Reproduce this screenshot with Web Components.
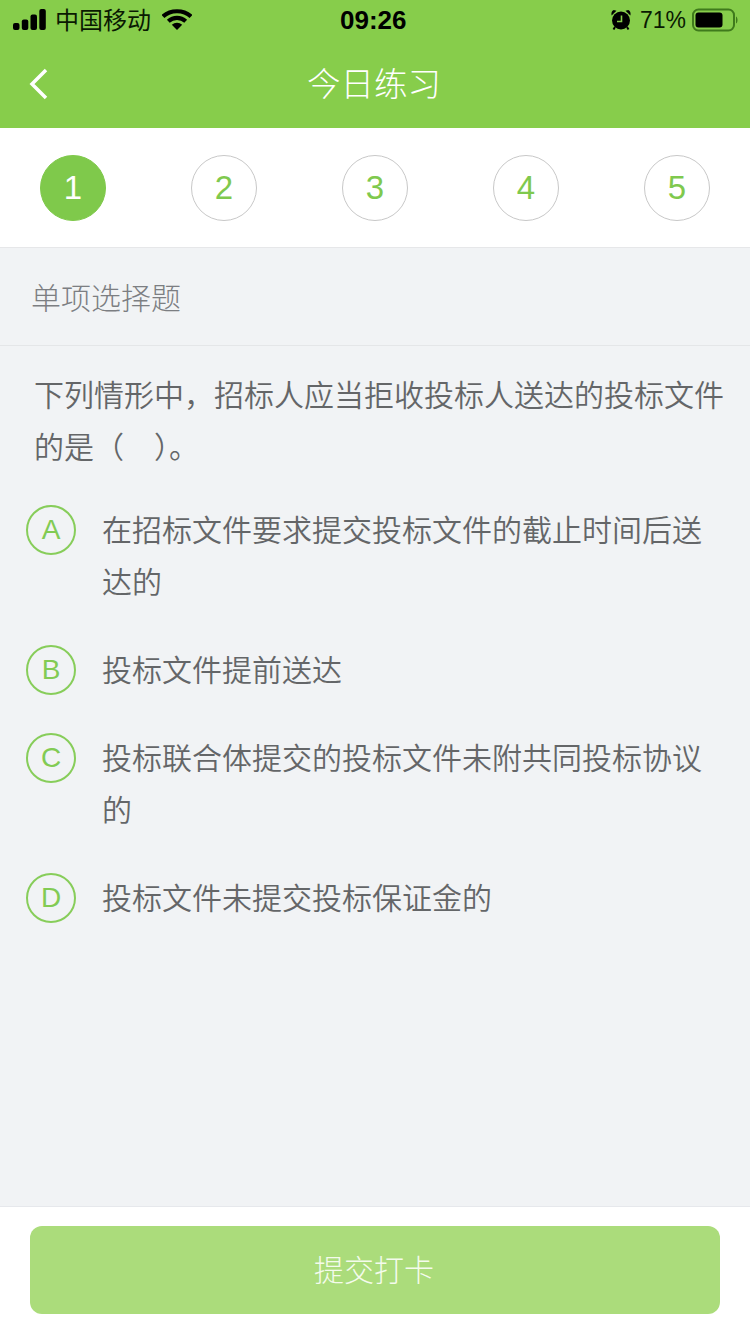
<!DOCTYPE html>
<html lang="zh">
<head>
<meta charset="utf-8">
<title>今日练习</title>
<style>
  html, body { margin: 0; padding: 0; }
  body {
    width: 750px;
    height: 1334px;
    overflow: hidden;
    display: flex;
    flex-direction: column;
    background: #f1f3f5;
    font-family: "Liberation Sans", "Noto Sans CJK SC", sans-serif;
  }
</style>
</head>
<body>
<status-bar></status-bar>
<nav-bar>今日练习</nav-bar>
<step-tabs></step-tabs>
<section-title>单项选择题</section-title>
<quiz-question>下列情形中，招标人应当拒收投标人送达的投标文件的是（　）。</quiz-question>
<quiz-option letter="A">在招标文件要求提交投标文件的截止时间后送达的</quiz-option>
<quiz-option letter="B">投标文件提前送达</quiz-option>
<quiz-option letter="C">投标联合体提交的投标文件未附共同投标协议的</quiz-option>
<quiz-option letter="D">投标文件未提交投标保证金的</quiz-option>
<submit-bar>提交打卡</submit-bar>

<script>
function shadow(el, html) {
  el.attachShadow({ mode: "open" }).innerHTML = html;
}

class StatusBar extends HTMLElement {
  constructor() {
    super();
    shadow(this, `
<style>
  :host {
    display: flex;
    align-items: center;
    justify-content: space-between;
    height: 40px;
    padding: 0 12px 0 13px;
    background: #87cd4b;
    color: #0a1a02;
    font: 24px "Liberation Sans", "Noto Sans CJK SC", sans-serif;
    position: relative;
  }
  .side { display: flex; align-items: center; }
  .carrier { margin: -4px 0 0 9px; }
  .wifi { margin-left: 11px; }
  .time {
    position: absolute;
    left: 340px;
    font-weight: 700;
    font-size: 26px;
    color: #000;
  }
  .pct { margin-left: 9px; font-size: 23px; }
  .batt { margin-left: 6px; }
</style>
<div class="side">
  <svg width="33" height="22" viewBox="0 0 33 22">
    <rect x="0" y="14" width="6.500" height="7" rx="2" fill="#000"/>
    <rect x="8.800" y="10.500" width="6.500" height="10.500" rx="2" fill="#000"/>
    <rect x="17.500" y="5.500" width="6.500" height="15.500" rx="2" fill="#000"/>
    <rect x="26.300" y="0" width="6.500" height="21" rx="2" fill="#000"/>
  </svg>
  <span class="carrier">中国移动</span>
  <svg class="wifi" width="30" height="22" viewBox="0 0 30 22">
    <path d="M1 7.500C8.500 .5 21.500 .5 29 7.500" fill="none" stroke="#000" stroke-width="4.200"/>
    <path d="M6.300 12.300C11.300 7.800 18.700 7.800 23.700 12.300" fill="none" stroke="#000" stroke-width="4.200"/>
    <path d="M9.800 15.800C12.800 13 17.200 13 20.200 15.800L15 21Z" fill="#000"/>
  </svg>
</div>
<span class="time">09:26</span>
<div class="side">
  <svg width="20" height="22" viewBox="0 0 20 22">
    <path d="M.6 6.500L5.500 1.800 2.800 1C.8 1.800 0 4 .6 6.500ZM19.400 6.500L14.500 1.800 17.200 1C19.200 1.800 20 4 19.400 6.500Z" fill="#000"/>
    <circle cx="10" cy="11.500" r="9" fill="#000"/>
    <path d="M10.500 6.500V12.500H6" fill="none" stroke="#87cd4b" stroke-width="1.600"/>
    <path d="M4 18L2.500 20.500M16 18L17.500 20.500" stroke="#000" stroke-width="2"/>
  </svg>
  <span class="pct">71%</span>
  <svg class="batt" width="46" height="24" viewBox="0 0 46 24">
    <rect x="1" y="1.500" width="41" height="21" rx="5.500" fill="none" stroke="#3f7a1c" stroke-width="2"/>
    <rect x="3.500" y="4.500" width="27" height="15" rx="3" fill="#000"/>
    <path d="M44 8.500C46 9.500 46 14.500 44 15.500Z" fill="#3f7a1c"/>
  </svg>
</div>`);
  }
}

class NavBar extends HTMLElement {
  constructor() {
    super();
    shadow(this, `
<style>
  :host {
    display: flex;
    align-items: center;
    justify-content: center;
    position: relative;
    height: 88px;
    background: #87cd4b;
    color: #fff;
    font: 33.500px "Noto Sans CJK SC", sans-serif;
    font-weight: 300;
  }
  .back { position: absolute; left: 28px; top: 28px; }
  .title { margin-top: -5px; margin-left: -2px; }
</style>
<svg class="back" width="20" height="32" viewBox="0 0 20 32">
  <path d="M18 2L4 16 18 30" fill="none" stroke="#fff" stroke-width="3.500"/>
</svg>
<span class="title"><slot></slot></span>`);
  }
}

class StepTabs extends HTMLElement {
  constructor() {
    super();
    const items = [1, 2, 3, 4, 5].map(n =>
      `<span class="step${n === 1 ? " on" : ""}">${n}</span>`).join("");
    shadow(this, `
<style>
  :host {
    display: flex;
    justify-content: space-between;
    align-items: flex-start;
    box-sizing: border-box;
    height: 120px;
    padding: 27px 40px 0;
    background: #fff;
    border-bottom: 1px solid #e6e7e9;
  }
  .step {
    box-sizing: border-box;
    width: 66px;
    height: 66px;
    border-radius: 50%;
    border: 1px solid #c8c8c8;
    display: flex;
    align-items: center;
    justify-content: center;
    color: #7fc94e;
    font: 33px "Liberation Sans", sans-serif;
  }
  .on { background: #7fc94b; border-color: #7fc94b; color: #fff; }
</style>
${items}`);
  }
}

class SectionTitle extends HTMLElement {
  constructor() {
    super();
    shadow(this, `
<style>
  :host {
    display: flex;
    align-items: center;
    box-sizing: border-box;
    height: 98px;
    padding: 0 0 0 31px;
    border-bottom: 1px solid #e4e6e8;
    color: #7c7e82;
    font: 30px/52px "Noto Sans CJK SC", sans-serif;
    font-weight: 300;
  }
  span { margin-top: -1px; }
</style>
<span><slot></slot></span>`);
  }
}

class QuizQuestion extends HTMLElement {
  constructor() {
    super();
    shadow(this, `
<style>
  :host {
    display: block;
    padding: 21px 26px 33px 34px;
    color: #646668;
    font: 30px/52px "Noto Sans CJK SC", sans-serif;
    font-weight: 350;
  }
</style>
<slot></slot>`);
  }
}

class QuizOption extends HTMLElement {
  constructor() {
    super();
    shadow(this, `
<style>
  :host {
    display: flex;
    align-items: flex-start;
    padding: 0 47px 36px 26px;
    color: #646668;
    font: 30px/52px "Noto Sans CJK SC", sans-serif;
    font-weight: 350;
  }
  .letter {
    box-sizing: border-box;
    flex: none;
    width: 50px;
    height: 50px;
    margin: 1px 26px 0 0;
    border: 2px solid #87cd5a;
    border-radius: 50%;
    display: flex;
    align-items: center;
    justify-content: center;
    color: #82cb54;
    font: 28px "Liberation Sans", sans-serif;
  }
  .text { margin-top: -2px; margin-bottom: 2px; }
</style>
<span class="letter">${this.getAttribute("letter")}</span>
<div class="text"><slot></slot></div>`);
  }
}

class SubmitBar extends HTMLElement {
  constructor() {
    super();
    shadow(this, `
<style>
  :host {
    display: block;
    margin-top: auto;
    box-sizing: border-box;
    height: 128px;
    padding: 19px 30px 20px;
    background: #fff;
    border-top: 1px solid #e6e8ec;
  }
  .btn {
    height: 88px;
    border-radius: 12px;
    background: #abdc7b;
    color: #f4fbec;
    display: flex;
    align-items: center;
    justify-content: center;
    font: 30px "Noto Sans CJK SC", sans-serif;
    font-weight: 300;
  }
  span { margin: -4px 2px 0 0; }
</style>
<div class="btn"><span><slot></slot></span></div>`);
  }
}

customElements.define("status-bar", StatusBar);
customElements.define("nav-bar", NavBar);
customElements.define("step-tabs", StepTabs);
customElements.define("section-title", SectionTitle);
customElements.define("quiz-question", QuizQuestion);
customElements.define("quiz-option", QuizOption);
customElements.define("submit-bar", SubmitBar);
</script>
</body>
</html>
